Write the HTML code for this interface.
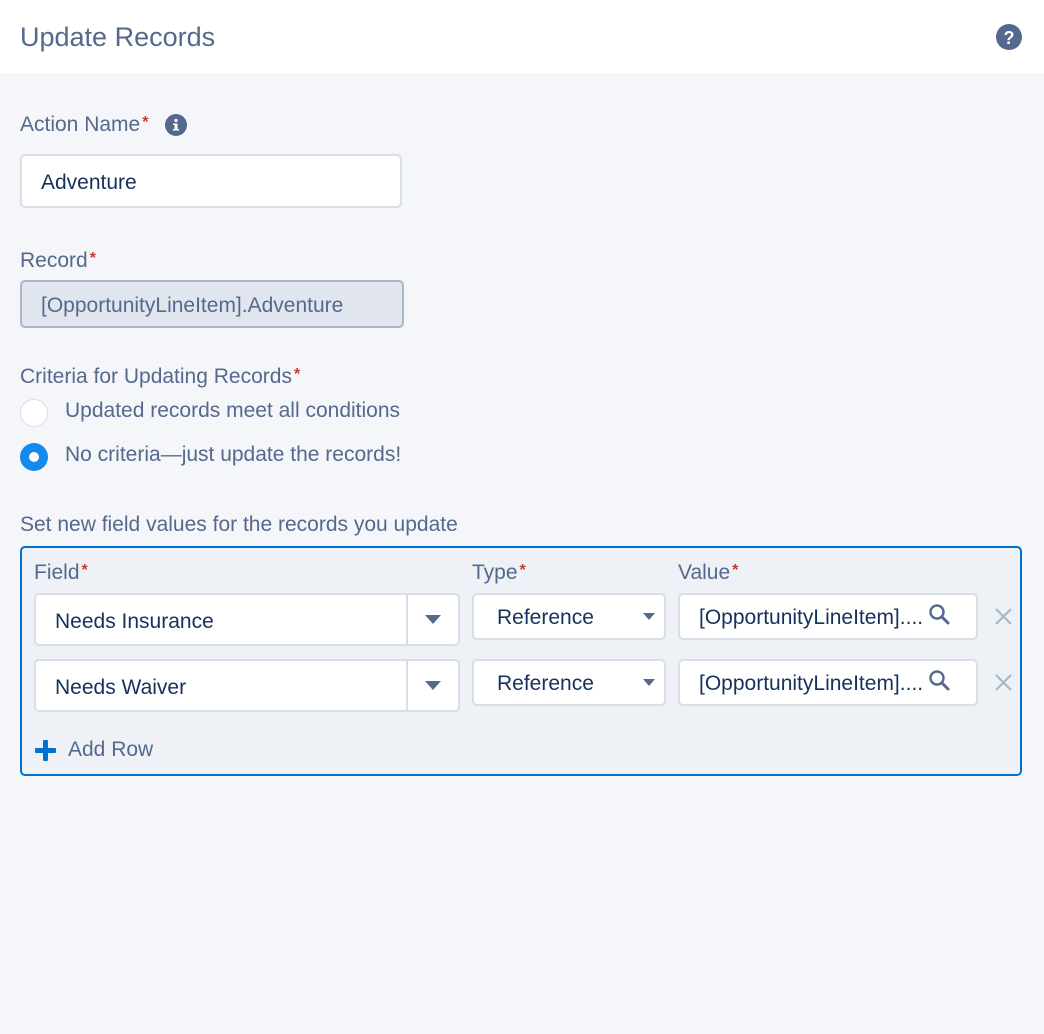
<!DOCTYPE html>
<html><head><meta charset="utf-8"><style>
*{box-sizing:border-box;margin:0;padding:0}
body{width:1044px;height:1034px;background:#f4f6f9;font-family:"Liberation Sans",sans-serif;color:#54698d;position:relative;overflow:hidden}
.a{position:absolute}
.hdr{left:0;top:0;width:1044px;height:73px;background:#fff}
.lbl{font-size:21px;line-height:24px;white-space:nowrap}
.req{color:#c23934;font-size:16px;vertical-align:4px;margin-left:2px;font-weight:bold}
.inp{background:#fff;border:2px solid #d8dde6;border-radius:5px;color:#16325c;font-size:21px;white-space:nowrap;overflow:hidden}
.arr{width:0;height:0;border-left:8px solid transparent;border-right:8px solid transparent;border-top:9px solid #54698d}
.sarr{width:0;height:0;border-left:6px solid transparent;border-right:6px solid transparent;border-top:7px solid #54698d}
</style></head><body>
<div class="a hdr"></div>
<div class="a" style="left:20px;top:21px;font-size:27px;line-height:32px;color:#54698d">Update Records</div>
<svg class="a" style="left:996px;top:24px" width="26" height="26" viewBox="0 0 26 26"><circle cx="13" cy="13" r="13" fill="#54698d"/><text x="13" y="20" text-anchor="middle" font-family="Liberation Sans" font-weight="bold" font-size="18" fill="#fff">?</text></svg>

<div class="a lbl" style="left:20px;top:111px">Action Name<span class="req">*</span></div>
<svg class="a" style="left:165px;top:114px" width="22" height="22" viewBox="0 0 22 22"><circle cx="11" cy="11" r="11" fill="#54698d"/><circle cx="11" cy="6.5" r="1.6" fill="#fff"/><rect x="9.5" y="9.5" width="3" height="7" fill="#fff"/><rect x="8" y="9.5" width="3" height="1.5" fill="#fff"/><rect x="8" y="15" width="6" height="1.5" fill="#fff"/></svg>
<div class="a inp" style="left:20px;top:154px;width:382px;height:54px;padding:15px 0 0 19px">Adventure</div>

<div class="a lbl" style="left:20px;top:247px">Record<span class="req">*</span></div>
<div class="a inp" style="left:20px;top:280px;width:384px;height:48px;background:#e0e5ee;border-color:#a8b7c7;color:#54698d;padding:12px 0 0 19px">[OpportunityLineItem].Adventure</div>

<div class="a lbl" style="left:20px;top:363px">Criteria for Updating Records<span class="req">*</span></div>
<div class="a" style="left:20px;top:399px;width:28px;height:28px;border-radius:50%;background:#fff;border:1.5px solid #d8dde6"></div>
<div class="a lbl" style="left:65px;top:399px">Updated records meet all conditions</div>
<div class="a" style="left:20px;top:443px;width:28px;height:28px;border-radius:50%;background:#1589ee"></div>
<div class="a" style="left:29px;top:452px;width:10px;height:10px;border-radius:50%;background:#fff"></div>
<div class="a lbl" style="left:65px;top:443px">No criteria—just update the records!</div>

<div class="a lbl" style="left:20px;top:513px">Set new field values for the records you update</div>

<div class="a" style="left:20px;top:546px;width:1002px;height:230px;border:2px solid #0070d2;border-radius:5px;background:#eef1f6"></div>
<div class="a lbl" style="left:34px;top:559px">Field<span class="req">*</span></div>
<div class="a lbl" style="left:472px;top:559px">Type<span class="req">*</span></div>
<div class="a lbl" style="left:678px;top:559px">Value<span class="req">*</span></div>

<div class="a inp" style="left:34px;top:593px;width:426px;height:53px;padding:15px 0 0 19px">Needs Insurance</div>
<div class="a" style="left:406px;top:595px;width:2px;height:49px;background:#d8dde6"></div>
<div class="a arr" style="left:425px;top:615px"></div>
<div class="a inp" style="left:472px;top:593px;width:194px;height:47px;padding:11px 0 0 23px">Reference</div>
<div class="a sarr" style="left:643px;top:613px"></div>
<div class="a inp" style="left:678px;top:593px;width:300px;height:47px;padding:11px 0 0 19px"><span style="display:inline-block;width:229px;overflow:hidden">[OpportunityLineItem]....</span></div>
<svg class="a" style="left:927px;top:602px" width="24" height="24" viewBox="0 0 24 24"><circle cx="10" cy="10" r="6.5" fill="none" stroke="#54698d" stroke-width="2.4"/><line x1="15" y1="15" x2="21" y2="21" stroke="#54698d" stroke-width="3" stroke-linecap="round"/></svg>
<svg class="a" style="left:994px;top:607px" width="19" height="19" viewBox="0 0 19 19"><path d="M2 2L17 17M17 2L2 17" stroke="#a8b7c7" stroke-width="2.2"/></svg>

<div class="a inp" style="left:34px;top:659px;width:426px;height:53px;padding:15px 0 0 19px">Needs Waiver</div>
<div class="a" style="left:406px;top:661px;width:2px;height:49px;background:#d8dde6"></div>
<div class="a arr" style="left:425px;top:681px"></div>
<div class="a inp" style="left:472px;top:659px;width:194px;height:47px;padding:11px 0 0 23px">Reference</div>
<div class="a sarr" style="left:643px;top:679px"></div>
<div class="a inp" style="left:678px;top:659px;width:300px;height:47px;padding:11px 0 0 19px"><span style="display:inline-block;width:229px;overflow:hidden">[OpportunityLineItem]....</span></div>
<svg class="a" style="left:927px;top:668px" width="24" height="24" viewBox="0 0 24 24"><circle cx="10" cy="10" r="6.5" fill="none" stroke="#54698d" stroke-width="2.4"/><line x1="15" y1="15" x2="21" y2="21" stroke="#54698d" stroke-width="3" stroke-linecap="round"/></svg>
<svg class="a" style="left:994px;top:673px" width="19" height="19" viewBox="0 0 19 19"><path d="M2 2L17 17M17 2L2 17" stroke="#a8b7c7" stroke-width="2.2"/></svg>

<svg class="a" style="left:35px;top:740px" width="21" height="21" viewBox="0 0 21 21"><rect x="8" y="0" width="5" height="21" rx="1" fill="#0070d2"/><rect x="0" y="8" width="21" height="5" rx="1" fill="#0070d2"/></svg>
<div class="a lbl" style="left:68px;top:738px">Add Row</div>
</body></html>
